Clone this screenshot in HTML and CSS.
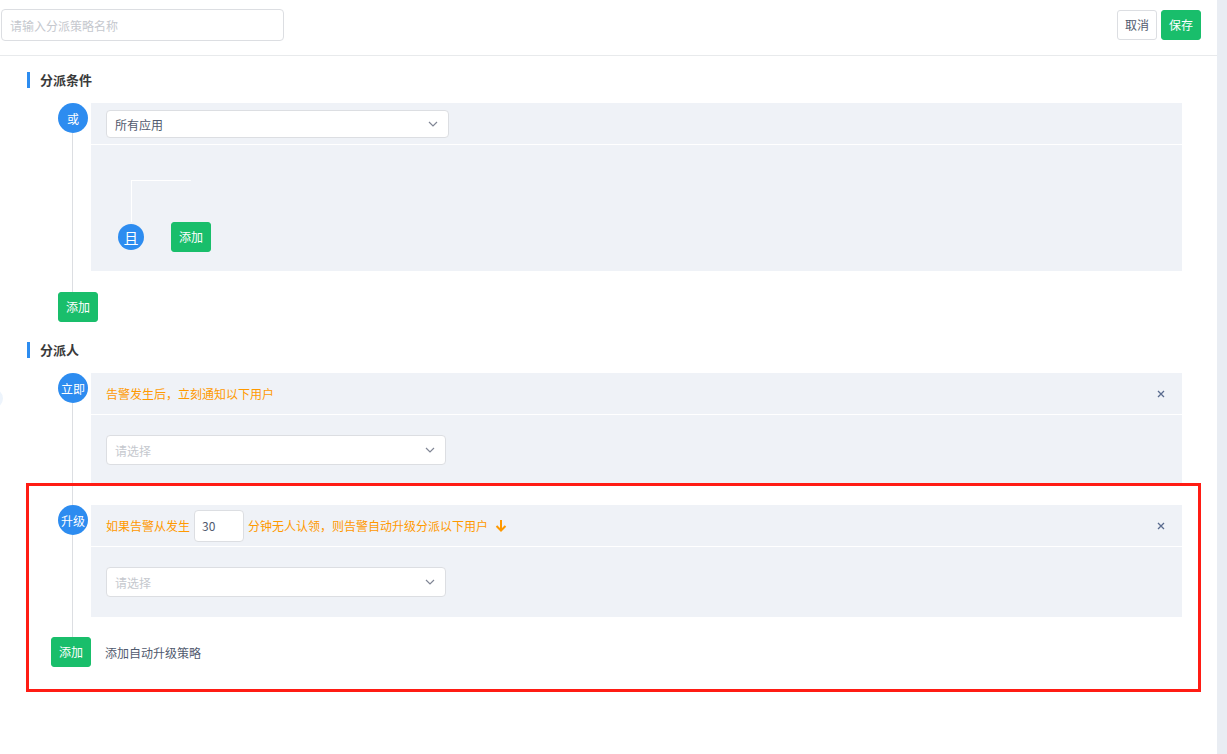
FILE: index.html
```html
<!DOCTYPE HTML>
<html lang="zh-CN">
<head>
    <meta charset="UTF-8">
    <title>分派策略</title>
    <link rel="stylesheet" href="styles.css">
</head>
<body>
    <div class="page">
        <div class="header">
            <input type="text" class="name-input" placeholder="请输入分派策略名称" />
            <div class="actions">
                <button class="btn btn-default">取消</button>
                <button class="btn btn-green">保存</button>
            </div>
        </div>

        <div class="content">
            <h3 class="title">分派条件</h3>
            <div class="flow flow-cond">
                <div class="row">
                    <div class="node"><span class="dot">或</span></div>
                    <div class="panel">
                        <div class="panel-head">
                            <div class="select select-sm">
                                <span class="value">所有应用</span>
                                <svg class="arrow" width="10" height="6" viewBox="0 0 10 6"><path d="M1 1l4 4 4-4" fill="none" stroke="#808695" stroke-width="1.2"/></svg>
                            </div>
                        </div>
                        <div class="panel-body cond-body">
                            <div class="branch"></div>
                            <div class="and-row">
                                <span class="dot dot-sm">且</span>
                                <button class="btn btn-green">添加</button>
                            </div>
                        </div>
                    </div>
                </div>
                <button class="btn btn-green add-or">添加</button>
            </div>

            <h3 class="title">分派人</h3>
            <div class="flow flow-user">
                <div class="row">
                    <div class="node"><span class="dot">立即</span></div>
                    <div class="panel">
                        <div class="panel-head notice">
                            <span>告警发生后，立刻通知以下用户</span>
                            <svg class="close" width="8" height="8" viewBox="0 0 8 8"><path d="M1 1l6 6M7 1l-6 6" stroke="#5a6c8f" stroke-width="1.3"/></svg>
                        </div>
                        <div class="panel-body">
                            <div class="select">
                                <span class="placeholder">请选择</span>
                                <svg class="arrow" width="10" height="6" viewBox="0 0 10 6"><path d="M1 1l4 4 4-4" fill="none" stroke="#808695" stroke-width="1.2"/></svg>
                            </div>
                        </div>
                    </div>
                </div>
                <div class="row">
                    <div class="node"><span class="dot">升级</span></div>
                    <div class="panel">
                        <div class="panel-head notice">
                            <span class="line">如果告警从发生 <input type="text" class="minutes" value="30" /> 分钟无人认领，则告警自动升级分派以下用户
                                <svg class="down" width="12" height="13" viewBox="0 0 12 13"><path d="M6 1v10M1.5 7L6 11.5 10.5 7" fill="none" stroke="#ff9900" stroke-width="2"/></svg>
                            </span>
                            <svg class="close" width="8" height="8" viewBox="0 0 8 8"><path d="M1 1l6 6M7 1l-6 6" stroke="#5a6c8f" stroke-width="1.3"/></svg>
                        </div>
                        <div class="panel-body">
                            <div class="select">
                                <span class="placeholder">请选择</span>
                                <svg class="arrow" width="10" height="6" viewBox="0 0 10 6"><path d="M1 1l4 4 4-4" fill="none" stroke="#808695" stroke-width="1.2"/></svg>
                            </div>
                        </div>
                    </div>
                </div>
                <div class="add-row">
                    <button class="btn btn-green">添加</button>
                    <span>添加自动升级策略</span>
                </div>
            </div>
        </div>

        <div class="edge-mark"></div>
        <div class="highlight"></div>
    </div>
    <div class="scrollbar"></div>
</body>
</html>
```

FILE: styles.css
```css
* {
    box-sizing: border-box;
}

body {
    margin: 0;
    display: flex;
    height: 754px;
    overflow: hidden;
    font-family: "Noto Sans CJK SC", "Noto Sans", sans-serif;
    font-size: 12px;
    color: #515a6e;
    background: #fff;
}

.page {
    position: relative;
    flex: 1;
}

.scrollbar {
    width: 10px;
    background: #e9edf3;
}

/* header */
.header {
    height: 56px;
    display: flex;
    justify-content: space-between;
    align-items: flex-start;
    padding: 9px 16px 0 1px;
    border-bottom: 1px solid #e8eaec;
}

.name-input {
    width: 283px;
    height: 32px;
    padding: 0 8px;
    border: 1px solid #dcdee2;
    border-radius: 4px;
    font: inherit;
    font-size: 12px;
    outline: none;
}

.name-input::placeholder {
    color: #c5c8ce;
}

.actions {
    display: flex;
    gap: 4px;
    padding-top: 1px;
}

.btn {
    width: 40px;
    height: 30px;
    padding: 0;
    border: 1px solid transparent;
    border-radius: 3px;
    font: inherit;
    font-size: 12px;
    line-height: 28px;
    cursor: pointer;
}

.btn-default {
    background: #fff;
    border-color: #dcdee2;
    color: #515a6e;
}

.btn-green {
    background: #19be6b;
    border-color: #19be6b;
    color: #fff;
}

/* content */
.content {
    padding: 16px 35px 0 27px;
}

.title {
    margin: 0 0 15px;
    height: 16px;
    line-height: 16px;
    padding-left: 10px;
    border-left: 3px solid #2d8cf0;
    font-size: 13px;
    font-weight: bold;
    color: #3a3a3a;
}

.flow {
    position: relative;
}

.flow::before {
    content: "";
    position: absolute;
    left: 45px;
    top: 30px;
    bottom: 30px;
    width: 1px;
    background: #dcdee2;
}

.row {
    display: flex;
    margin-bottom: 20px;
}

.node {
    width: 64px;
    flex-shrink: 0;
    position: relative;
}

.dot {
    display: flex;
    align-items: center;
    justify-content: center;
    width: 30px;
    height: 30px;
    margin-left: 31px;
    border-radius: 50%;
    background: #2d8cf0;
    color: #fff;
    font-size: 12px;
    position: relative;
}

.dot-sm {
    width: 26px;
    height: 26px;
    margin-left: 0;
    font-size: 15px;
}

.panel {
    flex: 1;
    background: #eff2f7;
}

.panel-head {
    height: 42px;
    padding: 7px 15px;
    border-bottom: 1px solid #fff;
}

.panel-body {
    padding: 20px 15px;
}

.select {
    width: 340px;
    height: 30px;
    padding: 0 10px 0 8px;
    display: flex;
    align-items: center;
    justify-content: space-between;
    background: #fff;
    border: 1px solid #dcdee2;
    border-radius: 4px;
}

.select-sm {
    width: 343px;
    height: 28px;
}

.select .value {
    color: #515a6e;
}

.select .placeholder {
    color: #c5c8ce;
}

.notice {
    display: flex;
    align-items: center;
    justify-content: space-between;
    color: #ff9900;
    padding-right: 17px;
}

.notice .line {
    display: flex;
    align-items: center;
    gap: 4px;
}

.minutes {
    width: 50px;
    height: 32px;
    padding: 0 7px;
    border: 1px solid #dcdee2;
    border-radius: 4px;
    font: inherit;
    font-size: 12px;
    color: #515a6e;
    outline: none;
}

.down {
    margin-left: 3px;
}

/* condition body */
.flow-cond {
    margin-bottom: 20px;
}

.flow-cond .row {
    margin-bottom: 21px;
}

.cond-body {
    padding: 35px 15px 19px 27px;
}

.branch {
    margin-left: 13px;
    width: 60px;
    height: 42px;
    border-top: 1px solid #fff;
    border-left: 1px solid #fff;
}

.and-row {
    display: flex;
    align-items: center;
    gap: 27px;
}

.add-or {
    margin-left: 31px;
    display: block;
    position: relative;
}

/* user list */
.add-row {
    display: flex;
    align-items: center;
    gap: 14px;
    margin-left: 24px;
    position: relative;
}

.add-row span {
    color: #515a6e;
}

.highlight {
    position: absolute;
    left: 26px;
    top: 483px;
    width: 1175px;
    height: 209px;
    border: 3px solid #ff1c14;
}

.edge-mark {
    position: absolute;
    left: -16px;
    top: 389px;
    width: 19px;
    height: 19px;
    border-radius: 50%;
    background: #edf4fc;
}
```
